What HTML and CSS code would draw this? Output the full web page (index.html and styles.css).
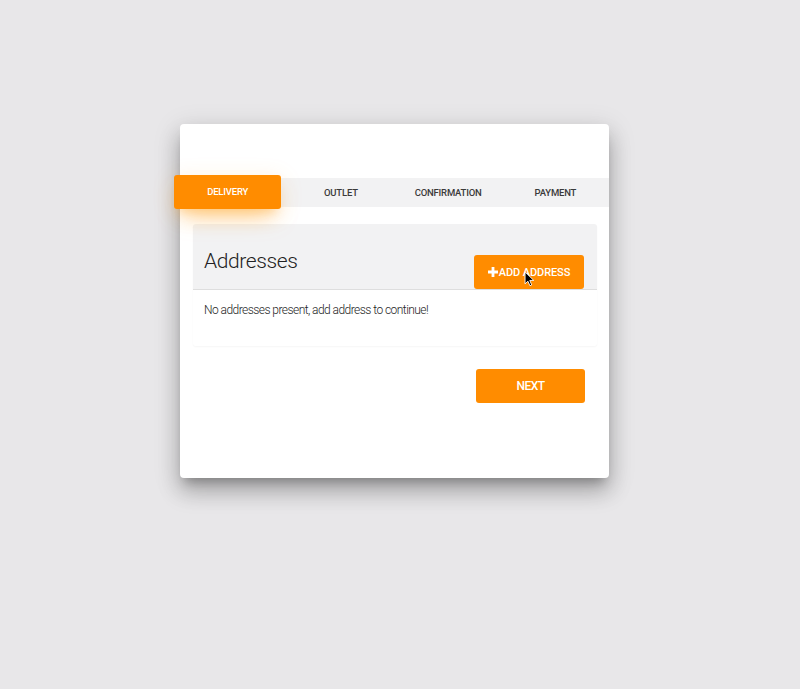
FILE: index.html
```html
<!DOCTYPE html>
<html lang="en">
<head>
<meta charset="utf-8">
<title>Checkout</title>
<link rel="stylesheet" href="styles.css">
</head>
<body>
<div class="page">
  <div class="card">
    <div class="card-top"></div>
    <nav class="tabs">
      <div class="tab"><span class="tab-active">DELIVERY</span></div>
      <div class="tab">OUTLET</div>
      <div class="tab">CONFIRMATION</div>
      <div class="tab">PAYMENT</div>
    </nav>
    <div class="content">
      <section class="panel">
        <div class="panel-head">
          <h2 class="panel-title">Addresses</h2>
          <button class="btn btn-add">
            <svg class="plus" viewBox="0 0 10 10" width="10" height="10"><path d="M3.6 0h2.8v3.6H10v2.8H6.4V10H3.6V6.4H0V3.6h3.6z" fill="#fff"/></svg>ADD ADDRESS
            <svg class="cursor" viewBox="0 0 12 18" width="11" height="16"><path d="M1 1v13.5l3.2-3.1 2.3 5.2 2-.9-2.2-5.1h4.5z" fill="#000" stroke="#fff" stroke-width="1"/></svg>
          </button>
        </div>
        <div class="panel-body">No addresses present, add address to continue!</div>
      </section>
      <div class="actions">
        <button class="btn btn-next">NEXT</button>
      </div>
    </div>
  </div>
</div>
</body>
</html>
```

FILE: styles.css
```css
* { box-sizing: border-box; }
html, body { margin: 0; padding: 0; }
body {
  background: #e8e7e9;
  font-family: Roboto, "Helvetica Neue", Arial, sans-serif;
  height: 689px;
  overflow: hidden;
}
.page {
  padding: 124px 0 0 180px;
}
.card {
  width: 429px;
  height: 354px;
  background: #fff;
  border-radius: 4px;
  box-shadow: 0 14px 22px 0 rgba(0,0,0,.22), 0 6px 26px 4px rgba(0,0,0,.10), 0 8px 10px -5px rgba(0,0,0,.25);
}
.card-top { height: 54px; }
.tabs {
  display: grid;
  grid-template-columns: repeat(4, 1fr);
  height: 29px;
  background: #f2f2f3;
  align-items: center;
  font-size: 9.5px;
  font-weight: 500;
  color: #3a3a3a;
  text-align: center;
  letter-spacing: -0.2px;
}
.tab { position: relative; height: 29px; line-height: 29px; }
.tab-active {
  display: block;
  margin: -3px 6px 0 -6px;
  height: 34px;
  line-height: 34px;
  background: #ff8c00;
  color: #fff;
  border-radius: 3px;
  box-shadow: 0 14px 24px -10px rgba(255,152,0,.6), 0 4px 22px 0 rgba(255,170,60,.18), 0 8px 10px -5px rgba(255,152,0,.25);
  position: relative;
  z-index: 1;
}
.content {
  padding: 17px 12px 0 13px;
}
.panel {
  background: #fff;
  border-radius: 3px;
  box-shadow: 0 1px 2px rgba(0,0,0,.04);
}
.panel-head {
  height: 66px;
  background: #f2f2f3;
  border-radius: 3px 3px 0 0;
  border-bottom: 1px solid #dedede;
  display: flex;
  justify-content: space-between;
  align-items: flex-end;
  padding: 0 13px 0 11px;
}
.panel-title {
  margin: 0 0 16px 0;
  font-size: 21px;
  font-weight: 300;
  color: #222;
  letter-spacing: -0.4px;
  line-height: 24px;
}
.btn {
  border: 0;
  background: #ff8c00;
  color: #fff;
  font-family: Roboto, "Helvetica Neue", Arial, sans-serif;
  font-weight: 500;
  border-radius: 3px;
  cursor: pointer;
  padding: 0;
}
.btn-add {
  position: relative;
  width: 110px;
  height: 34px;
  font-size: 11px;
  display: flex;
  align-items: center;
  justify-content: center;
  letter-spacing: -0.1px;
}
.plus { margin-right: 1px; }
.cursor {
  position: absolute;
  left: 50px;
  top: 16px;
}
.panel-body {
  height: 56px;
  padding: 13px 11px 0;
  font-size: 12px;
  font-weight: 300;
  color: #1e1e1e;
  line-height: 14px;
  letter-spacing: -0.55px;
}
.actions {
  display: flex;
  justify-content: flex-end;
  padding: 23px 12px 0 0;
}
.btn-next {
  width: 109px;
  height: 34px;
  font-size: 12px;
  letter-spacing: -0.5px;
}
```
